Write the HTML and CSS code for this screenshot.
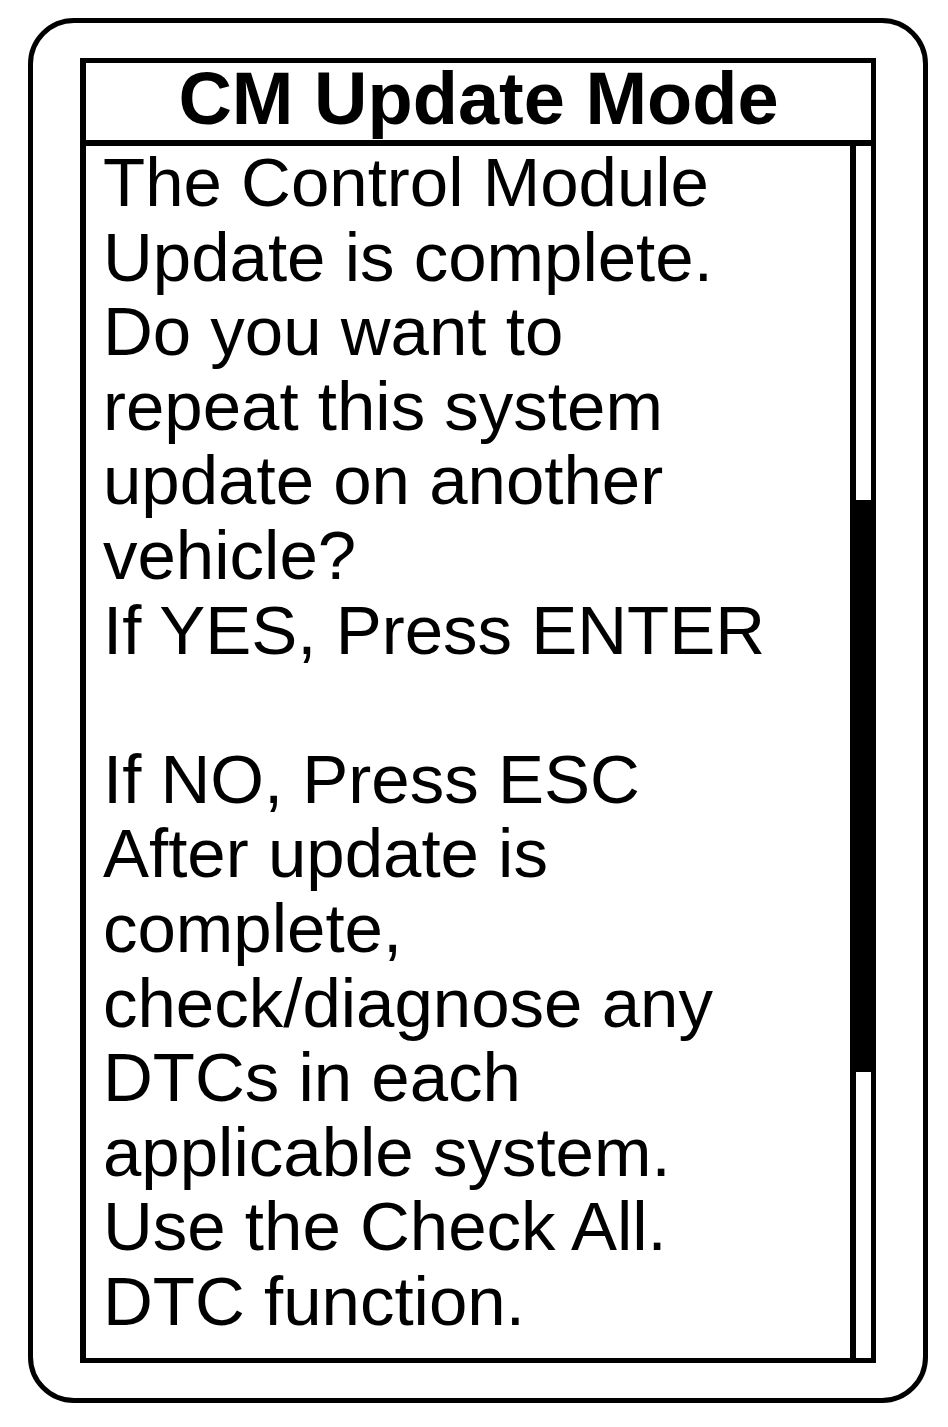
FILE: index.html
```html
<!DOCTYPE html>
<html>
<head>
<title>CM Update Mode</title>
<link rel="stylesheet" href="styles.css">
</head>
<body>

<div class="device">
  <div class="screen">
    <h1 class="title">CM Update Mode</h1>
    <div class="content">
      <div class="message">
        <div>The Control Module</div>
        <div>Update is complete.</div>
        <div>Do you want to</div>
        <div>repeat this system</div>
        <div>update on another</div>
        <div>vehicle?</div>
        <div>If YES, Press ENTER</div>
        <div class="blank"></div>
        <div>If NO, Press ESC</div>
        <div>After update is</div>
        <div>complete,</div>
        <div>check/diagnose any</div>
        <div>DTCs in each</div>
        <div>applicable system.</div>
        <div>Use the Check All.</div>
        <div>DTC function.</div>
      </div>
      <div class="scrollbar">
        <div class="thumb"></div>
      </div>
    </div>
  </div>
</div>

</body>
</html>
```

FILE: styles.css
```css
body {
  margin: 0;
  background: #fff;
  color: #000;
  font-family: "Liberation Sans", Arial, sans-serif;
}

.device {
  box-sizing: border-box;
  width: 900px;
  height: 1385px;
  margin: 18px 0 0 28px;
  padding: 35px 47px;
  border: 5px solid #000;
  border-radius: 46px;
}

.screen {
  box-sizing: border-box;
  height: 100%;
  display: flex;
  flex-direction: column;
  border: 5px solid #000;
  border-left-width: 6px;
}

.title {
  margin: 0;
  height: 77px;
  border-bottom: 6px solid #000;
  font-size: 74px;
  line-height: 72px;
  font-weight: bold;
  text-align: center;
}

.content {
  flex: 1;
  display: flex;
}

.message {
  flex: 1;
  padding-left: 17px;
  font-size: 69px;
  line-height: 74.6px;
}

.blank { height: 74.6px; }

.scrollbar {
  width: 15px;
  border-left: 6px solid #000;
  padding-top: 354px;
}

.thumb {
  height: 572px;
  background: #000;
}
```
